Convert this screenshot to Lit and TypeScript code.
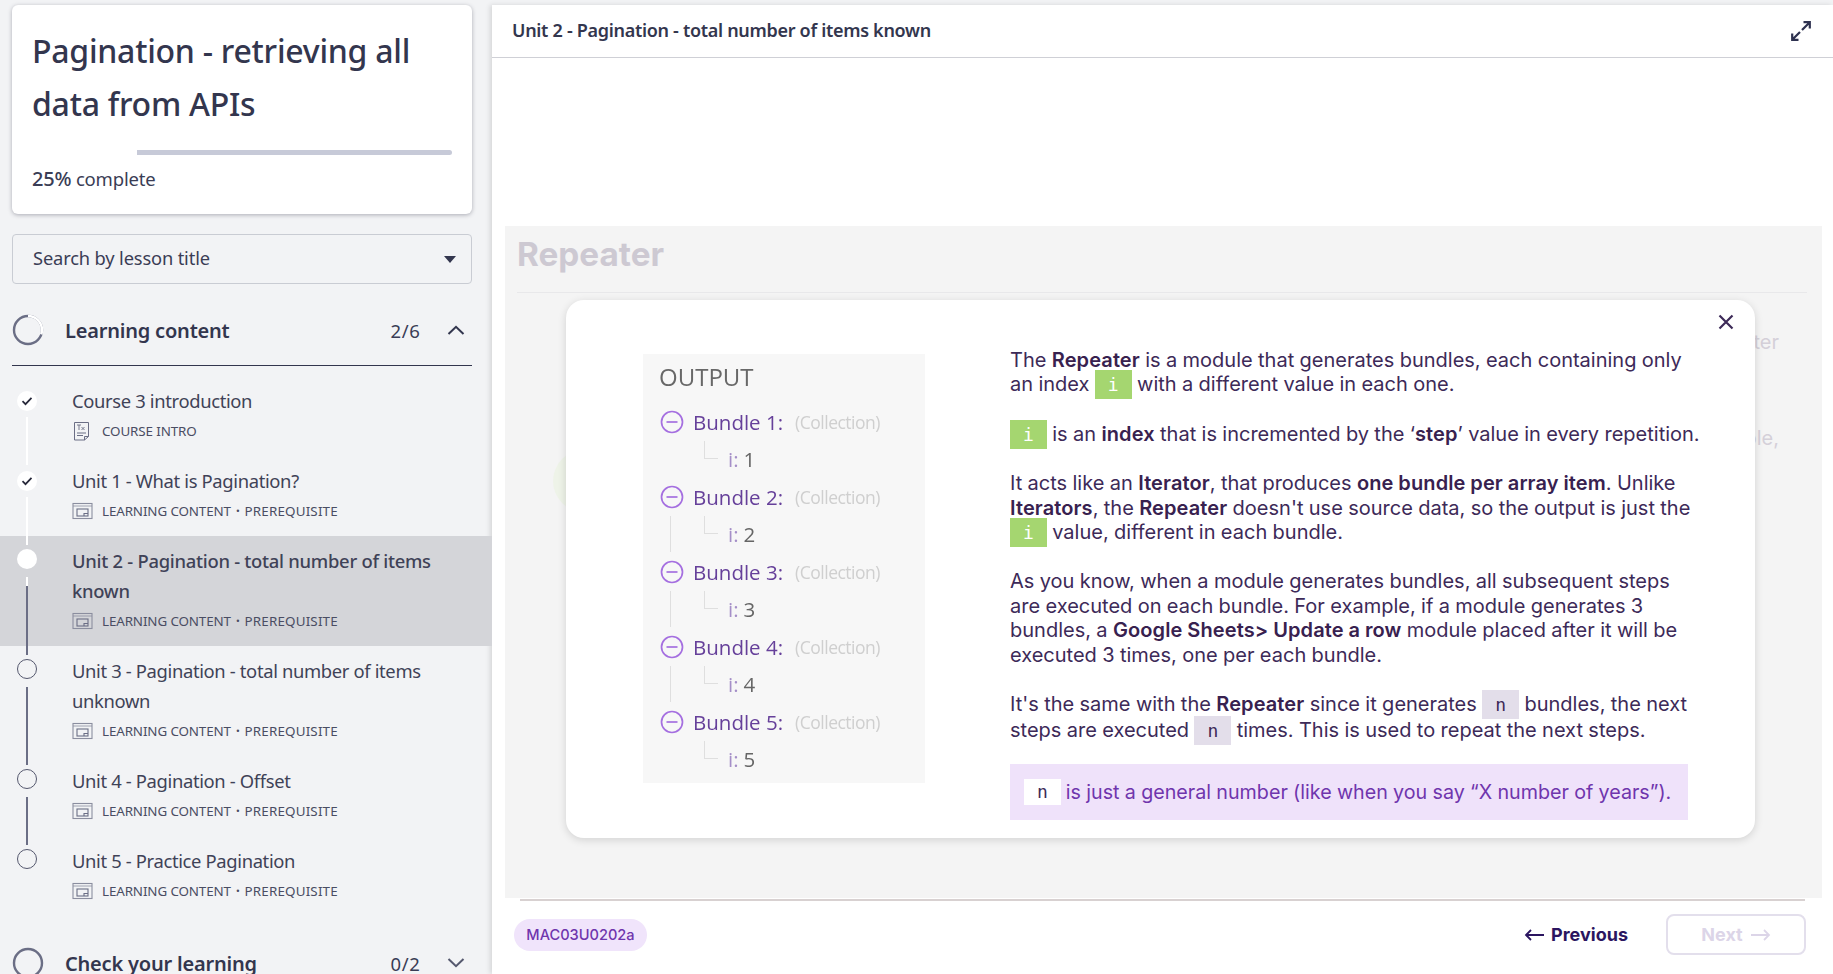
import { LitElement, css, html, nothing, svg } from 'lit';
import { customElement } from 'lit/decorators.js';

type Lesson = {
  title: string;
  kind: 'intro' | 'content';
  state: 'done' | 'current' | 'todo';
  line?: 'white' | 'dark' | 'split';
};

const LESSONS: Lesson[] = [
  { title: 'Course 3 introduction', kind: 'intro', state: 'done', line: 'white' },
  { title: 'Unit 1 - What is Pagination?', kind: 'content', state: 'done', line: 'white' },
  { title: 'Unit 2 - Pagination - total number of items known', kind: 'content', state: 'current', line: 'split' },
  { title: 'Unit 3 - Pagination - total number of items unknown', kind: 'content', state: 'todo', line: 'dark' },
  { title: 'Unit 4 - Pagination - Offset', kind: 'content', state: 'todo', line: 'dark' },
  { title: 'Unit 5 - Practice Pagination', kind: 'content', state: 'todo' },
];

@customElement('app-root')
export class AppRoot extends LitElement {
  static styles = css`
    :host {
      display: flex;
      width: 1833px;
      height: 974px;
      overflow: hidden;
      background: #f2f3f5;
      font-family: 'Noto Sans', sans-serif;
      color: #3a3d55;
    }

    /* Sidebar */
    .sidebar {
      width: 492px;
      flex: none;
      padding-top: 5px;
    }
    .card {
      margin: 0 20px 0 12px;
      height: 209px;
      box-sizing: border-box;
      padding: 19px 20px 0;
      background: #fff;
      border-radius: 6px;
      box-shadow: 0 1px 4px rgba(40, 40, 60, 0.35);
    }
    .card h1 {
      margin: 0;
      font-size: 32px;
      line-height: 53px;
      font-weight: 500;
      letter-spacing: -0.25px;
      color: #33364e;
    }
    .bar {
      margin-top: 20px;
      height: 5px;
      border-radius: 3px;
      background: linear-gradient(to right, #fff 25%, #c7cad8 25%);
    }
    .pct {
      margin-top: 9px;
      font-size: 18.5px;
      line-height: 30px;
      letter-spacing: -0.2px;
    }
    .pct b {
      font-weight: 500;
      font-size: 20px;
    }
    .select {
      margin: 20px 20px 0 12px;
      height: 50px;
      box-sizing: border-box;
      display: flex;
      align-items: center;
      justify-content: space-between;
      padding: 0 15px 3px 20px;
      border: 1px solid #c9ccd3;
      border-radius: 4px;
      font-size: 18.3px;
      letter-spacing: -0.15px;
    }
    .caret {
      width: 0;
      height: 0;
      margin-top: 3px;
      border-left: 6px solid transparent;
      border-right: 6px solid transparent;
      border-top: 7px solid #33364e;
    }
    .section {
      margin: 0 20px 0 12px;
      display: flex;
      align-items: center;
      padding: 31px 0 20px;
      border-bottom: 1px solid #33364e;
    }
    .section.last {
      padding-top: 32px;
      border: none;
    }
    .ring {
      width: 32px;
      height: 32px;
      margin: -1px 21px -1px 0;
      flex: none;
    }
    .section .name {
      flex: 1;
      font-size: 20px;
      font-weight: 600;
      letter-spacing: -0.2px;
      color: #33364e;
    }
    .section .count {
      font-size: 18.5px;
      letter-spacing: 0.6px;
      width: 56.5px;
    }
    .section svg.chev {
      width: 18px;
      height: 10px;
      margin-right: 7px;
    }
    .lessons {
      margin-top: 10px;
    }
    .lesson {
      position: relative;
      padding: 10px 40px 15px 72px;
    }
    .lesson.current {
      background: #d4d5d9;
    }
    .lesson .title {
      font-size: 18.4px;
      line-height: 30px;
      letter-spacing: -0.35px;
      color: #3f4257;
    }
    .lesson.current .title {
      font-weight: 500;
      letter-spacing: -0.27px;
    }
    .meta {
      margin-top: 5px;
      height: 20px;
      display: flex;
      align-items: center;
      font-size: 13.4px;
      letter-spacing: -0.12px;
      color: #4a4d63;
    }
    .meta svg {
      width: 21px;
      height: 20px;
      margin-right: 9px;
      flex: none;
    }
    .meta .sep {
      margin: 0 5px;
      font-weight: 700;
    }
    .meta .prereq {
      letter-spacing: 0.17px;
    }
    .dot {
      position: absolute;
      left: 17px;
      top: 13px;
      width: 20px;
      height: 20px;
      box-sizing: border-box;
      border-radius: 50%;
      background: #fff;
      display: flex;
      align-items: center;
      justify-content: center;
      z-index: 1;
    }
    .dot.done {
      top: 15px;
    }
    .dot.todo {
      background: transparent;
      border: 1px solid #55586e;
    }
    .dot svg {
      width: 12px;
      height: 10px;
    }
    .line {
      position: absolute;
      left: 26px;
      top: 41px;
      bottom: -9px;
      width: 2px;
      z-index: 1;
    }
    .line.white {
      background: #fff;
    }
    .line.dark {
      background: #6b6e85;
    }
    .line.split {
      background: linear-gradient(to bottom, #fff 9px, #6b6e85 9px);
    }

    /* Main column */
    .main {
      flex: 1;
      margin-top: 5px;
      background: #fff;
      box-shadow: -2px 0 5px rgba(0, 0, 0, 0.12);
      display: flex;
      flex-direction: column;
      min-width: 0;
    }
    .topbar {
      height: 52px;
      flex: none;
      display: flex;
      align-items: center;
      justify-content: space-between;
      padding: 0 22px 0 20px;
      border-bottom: 1px solid #cfd0d6;
      color: #33364e;
    }
    .topbar span {
      margin-top: -2px;
      font-size: 18px;
      font-weight: 600;
      letter-spacing: -0.3px;
    }
    .topbar svg {
      width: 20px;
      height: 20px;
    }
    .panel {
      position: relative;
      margin: 168px 11px 0 13px;
      height: 672px;
      flex: none;
      background: #f4f4f4;
      font-family: Inter, sans-serif;
      overflow: hidden;
    }
    .panel h2 {
      margin: 0 15px 0 12px;
      height: 67px;
      box-sizing: border-box;
      border-bottom: 1px solid #e8e8ea;
      padding-top: 4px;
      font-size: 33.3px;
      line-height: 48px;
      font-weight: 700;
      color: #cdc9d2;
    }
    .ghost {
      position: absolute;
      right: 43px;
      font-size: 20px;
      line-height: 24px;
      color: #d4d0d9;
    }
    .ghost.one {
      top: 104px;
    }
    .ghost.two {
      top: 200px;
    }
    .blob {
      position: absolute;
      left: 48px;
      top: 224px;
      width: 62px;
      height: 62px;
      border-radius: 50%;
      background: #eef3e8;
    }
    .modal {
      position: absolute;
      left: 61px;
      top: 74px;
      width: 1189px;
      height: 538px;
      box-sizing: border-box;
      padding: 48px 0 0 77px;
      display: flex;
      gap: 85px;
      background: #fff;
      border-radius: 18px;
      box-shadow: 0 2px 8px rgba(0, 0, 0, 0.14);
    }
    .close {
      position: absolute;
      right: 21px;
      top: 14px;
      width: 16px;
      height: 16px;
    }

    /* Output shot */
    .output {
      width: 282px;
      height: 429px;
      margin-top: 6px;
      flex: none;
      box-sizing: border-box;
      background: #f7f7f7;
      font-family: 'Open Sans', sans-serif;
      filter: blur(0.35px);
    }
    .output .head {
      height: 49px;
      padding: 3px 0 0 16px;
      box-sizing: border-box;
      font-size: 24px;
      line-height: 40px;
      color: #686868;
    }
    .bundle {
      position: relative;
      height: 75px;
    }
    .bundle .row {
      height: 37.5px;
      display: flex;
      align-items: center;
      padding-left: 18px;
      font-size: 20.5px;
      color: #66409a;
    }
    .bundle .row svg {
      width: 24px;
      height: 24px;
      margin: 0 9px 0 -1px;
    }
    .bundle .coll {
      margin-left: 12px;
      font-size: 17.5px;
      letter-spacing: -0.5px;
      color: #cfcfcf;
    }
    .bundle .row.sub {
      padding-left: 85px;
      color: #a58fc8;
    }
    .bundle .row.sub span {
      margin-left: 5px;
      color: #666;
    }
    .elbow {
      position: absolute;
      left: 61px;
      top: 38px;
      width: 13px;
      height: 17px;
      border-left: 1px solid #dfdfdf;
      border-bottom: 1px solid #dfdfdf;
    }
    .stem {
      position: absolute;
      left: 27px;
      top: 38px;
      height: 36px;
      border-left: 1px solid #dfdfdf;
    }

    /* Copy */
    .copy {
      font-size: 20px;
      line-height: 24.4px;
      word-spacing: -0.25px;
      color: #3d2a58;
      white-space: nowrap;
    }
    .copy p {
      margin: 0 0 25px;
    }
    .copy p.tall {
      line-height: 25.6px;
    }
    .copy b {
      font-weight: 600;
      letter-spacing: 0.1px;
      color: #38214f;
    }
    code {
      padding: 4px 13px;
      font-family: 'DejaVu Sans Mono', monospace;
      font-size: 18px;
      line-height: 0;
    }
    code.i {
      background: #a5d670;
      color: #fff;
    }
    code.n {
      background: #e3deea;
      color: #3d2a58;
    }
    .note {
      width: 678px;
      height: 56px;
      box-sizing: border-box;
      margin-top: -4px;
      padding: 0 14px;
      display: flex;
      align-items: center;
      gap: 5px;
      background: #efe2fa;
      color: #6f35ad;
      font-size: 19.7px;
    }
    .note code.n {
      padding: 0 13px;
      line-height: 26px;
      background: #fff;
    }

    /* Footer */
    .rule {
      margin: 1px 28px 0 28px;
      height: 2px;
      flex: none;
      background: #d8d1d1;
    }
    .footer {
      display: flex;
      align-items: center;
      padding: 13px 27px 0 22px;
      font-family: Inter, sans-serif;
    }
    .code {
      width: 133px;
      height: 32px;
      display: flex;
      align-items: center;
      justify-content: center;
      border-radius: 17px;
      background: #f0e4fb;
      color: #6f35ad;
      font-size: 14.6px;
      font-weight: 500;
    }
    .prev {
      margin-left: auto;
      display: flex;
      align-items: center;
      gap: 6px;
      font-size: 18px;
      font-weight: 700;
      color: #2b1560;
    }
    .next {
      margin-left: 38px;
      width: 140px;
      height: 41px;
      box-sizing: border-box;
      display: flex;
      align-items: center;
      justify-content: center;
      gap: 7px;
      border: 2px solid #e3dfec;
      border-radius: 8px;
      font-size: 18px;
      font-weight: 700;
      color: #dcd5e8;
    }
    .prev svg,
    .next svg {
      width: 21px;
      height: 12px;
    }
  `;

  private ring(progress: number) {
    const c = 2 * Math.PI * 14;
    return html`<svg class="ring" viewBox="0 0 32 32">
      <circle cx="16" cy="16" r="14" fill="none" stroke="#6b6e85" stroke-width="2.4"></circle>
      ${progress > 0
        ? svg`<circle cx="16" cy="16" r="14" fill="none" stroke="#fff" stroke-width="2.6"
            stroke-dasharray="${c * progress} ${c}" transform="rotate(-90 16 16)"></circle>`
        : nothing}
    </svg>`;
  }

  private typeIcon(kind: Lesson['kind']) {
    if (kind === 'intro') {
      return html`<svg viewBox="0 0 21 20" fill="none" stroke="#6b6e85" stroke-width="1">
        <path d="M2.5 1.5h14v14l-4 3.5h-10z"></path>
        <path d="M12.5 19v-3.5h4M5 12h9M5 14.5h6"></path>
        <path d="M5 4h4M7 4v5M9.5 6l3 3M12.5 6l-3 3" stroke-width="0.9"></path>
      </svg>`;
    }
    return html`<svg viewBox="0 0 21 20" fill="none" stroke="#8b8e9f" stroke-width="1.1">
      <rect x="1" y="2.5" width="19" height="15"></rect>
      <path d="M1 5h19" stroke-width="0.8"></path>
      <rect x="5" y="8" width="11" height="7" stroke="#6b6e85"></rect>
      <path d="M12 15v-2.5h4" stroke="#6b6e85"></path>
    </svg>`;
  }

  private renderLesson(l: Lesson) {
    return html`<div class="lesson ${l.state}">
      <span class="dot ${l.state}">
        ${l.state === 'done'
          ? html`<svg viewBox="0 0 12 10" fill="none" stroke="#26283a" stroke-width="1.7">
              <path d="M1.5 5.2l3 3 6-6.4"></path>
            </svg>`
          : nothing}
      </span>
      ${l.line ? html`<span class="line ${l.line}"></span>` : nothing}
      <div class="title">${l.title}</div>
      <div class="meta">
        ${this.typeIcon(l.kind)}
        ${l.kind === 'intro'
          ? 'COURSE INTRO'
          : html`LEARNING CONTENT<span class="sep">·</span><span class="prereq">PREREQUISITE</span>`}
      </div>
    </div>`;
  }

  private renderBundle(n: number) {
    return html`<div class="bundle">
      ${n > 1 && n < 5 ? html`<span class="stem"></span>` : nothing}
      <span class="elbow"></span>
      <div class="row">
        <svg viewBox="0 0 24 24" fill="none" stroke="#a56fe0" stroke-width="1.7">
          <circle cx="12" cy="12" r="10.5"></circle>
          <path d="M6.5 12h11"></path>
        </svg>
        Bundle ${n}:<span class="coll">(Collection)</span>
      </div>
      <div class="row sub">i:<span>${n}</span></div>
    </div>`;
  }

  render() {
    return html`
      <aside class="sidebar">
        <div class="card">
          <h1>Pagination - retrieving all data from APIs</h1>
          <div class="bar"></div>
          <div class="pct"><b>25%</b> complete</div>
        </div>
        <div class="select">Search by lesson title<span class="caret"></span></div>
        <div class="section">
          ${this.ring(0.3)}
          <span class="name">Learning content</span>
          <span class="count">2/6</span>
          <svg class="chev" viewBox="0 0 18 10" fill="none" stroke="#33364e" stroke-width="2">
            <path d="M1.5 9L9 1.8 16.5 9"></path>
          </svg>
        </div>
        <div class="lessons">${LESSONS.map((l) => this.renderLesson(l))}</div>
        <div class="section last">
          ${this.ring(0)}
          <span class="name">Check your learning</span>
          <span class="count">0/2</span>
          <svg class="chev" viewBox="0 0 18 10" fill="none" stroke="#55586e" stroke-width="2">
            <path d="M1.5 1L9 8.2 16.5 1"></path>
          </svg>
        </div>
      </aside>
      <section class="main">
        <div class="topbar">
          <span>Unit 2 - Pagination - total number of items known</span>
          <svg viewBox="0 0 20 20" fill="none" stroke="#2e3250" stroke-width="2.2">
            <path d="M12.5 1.2H18.8V7.5M18.8 1.2L11 9"></path>
            <path d="M1.2 12.5V18.8H7.5M1.2 18.8L9 11"></path>
          </svg>
        </div>
        <div class="panel">
          <h2>Repeater</h2>
          <span class="ghost one">ter</span>
          <span class="ghost two">ble,</span>
          <span class="blob"></span>
          <div class="modal">
            <svg class="close" viewBox="0 0 16 16" fill="none" stroke="#3d2a58" stroke-width="2.2">
              <path d="M1.5 1.5l13 13M14.5 1.5l-13 13"></path>
            </svg>
            <div class="output">
              <div class="head">OUTPUT</div>
              ${[1, 2, 3, 4, 5].map((n) => this.renderBundle(n))}
            </div>
            <div class="copy">
              <p>
                The <b>Repeater</b> is a module that generates bundles, each containing only<br />
                an index <code class="i">i</code> with a different value in each one.
              </p>
              <p>
                <code class="i">i</code> is an <b>index</b> that is incremented by the ‘<b>step</b>’ value in every repetition.
              </p>
              <p>
                It acts like an <b>Iterator</b>, that produces <b>one bundle per array item</b>. Unlike<br />
                <b>Iterators</b>, the <b>Repeater</b> doesn't use source data, so the output is just the<br />
                <code class="i">i</code> value, different in each bundle.
              </p>
              <p>
                As you know, when a module generates bundles, all subsequent steps<br />
                are executed on each bundle. For example, if a module generates 3<br />
                bundles, a <b>Google Sheets&gt; Update a row</b> module placed after it will be<br />
                executed 3 times, one per each bundle.
              </p>
              <p class="tall">
                It's the same with the <b>Repeater</b> since it generates <code class="n">n</code> bundles, the next<br />
                steps are executed <code class="n">n</code> times. This is used to repeat the next steps.
              </p>
              <div class="note">
                <code class="n">n</code>
                <span>is just a general number (like when you say “X number of years”).</span>
              </div>
            </div>
          </div>
        </div>
        <div class="rule"></div>
        <div class="footer">
          <span class="code">MAC03U0202a</span>
          <span class="prev">
            <svg viewBox="0 0 21 12" fill="none" stroke="currentColor" stroke-width="1.8">
              <path d="M20 6H2M7 1L2 6l5 5"></path>
            </svg>
            Previous
          </span>
          <span class="next">
            Next
            <svg viewBox="0 0 21 12" fill="none" stroke="currentColor" stroke-width="1.8">
              <path d="M1 6h18M14 1l5 5-5 5"></path>
            </svg>
          </span>
        </div>
      </section>
    `;
  }
}
